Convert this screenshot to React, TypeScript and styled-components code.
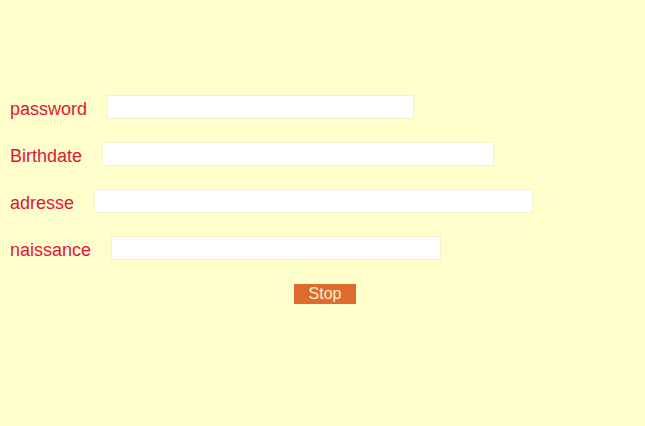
import React from 'react';
import styled, { createGlobalStyle } from 'styled-components';

const GlobalStyle = createGlobalStyle`
  html, body {
    margin: 0;
    padding: 0;
    background: #ffffcc;
  }
  body {
    font-family: "Liberation Sans", Arial, sans-serif;
  }
`;

const Page = styled.div`
  width: 645px;
  height: 426px;
  background: #ffffcc;
  padding-top: 95px;
  box-sizing: border-box;
`;

const Form = styled.form`
  display: flex;
  flex-direction: column;
  gap: 23px;
  padding-left: 10px;
`;

const Row = styled.div`
  display: flex;
  align-items: center;
  gap: 20px;
  height: 24px;
`;

const Label = styled.label`
  color: #e0143c;
  font-size: 18px;
  line-height: 24px;
  padding-top: 3px;
`;

const Field = styled.input<{ $w: number }>`
  width: ${(p) => p.$w}px;
  height: 24px;
  box-sizing: border-box;
  background: #ffffff;
  border: 1px solid #f2f2cf;
  outline: none;
  margin: 0;
  padding: 0 4px;
`;

const Actions = styled.div`
  display: flex;
  justify-content: center;
  padding-right: 5px;
  margin-top: 1px;
`;

const StopButton = styled.button`
  width: 62px;
  height: 20px;
  background: #df6a2d;
  color: #fbefc9;
  border: none;
  padding: 0;
  font-family: "Liberation Sans", Arial, sans-serif;
  font-size: 16px;
  line-height: 20px;
  cursor: pointer;
`;

const fields = [
  { name: 'password', w: 307 },
  { name: 'Birthdate', w: 392 },
  { name: 'adresse', w: 439 },
  { name: 'naissance', w: 330 },
];

export default function App() {
  return (
    <>
      <GlobalStyle />
      <Page>
        <Form onSubmit={(e) => e.preventDefault()}>
          {fields.map((f) => (
            <Row key={f.name}>
              <Label htmlFor={f.name}>{f.name}</Label>
              <Field id={f.name} $w={f.w} type="text" />
            </Row>
          ))}
          <Actions>
            <StopButton type="button">Stop</StopButton>
          </Actions>
        </Form>
      </Page>
    </>
  );
}
